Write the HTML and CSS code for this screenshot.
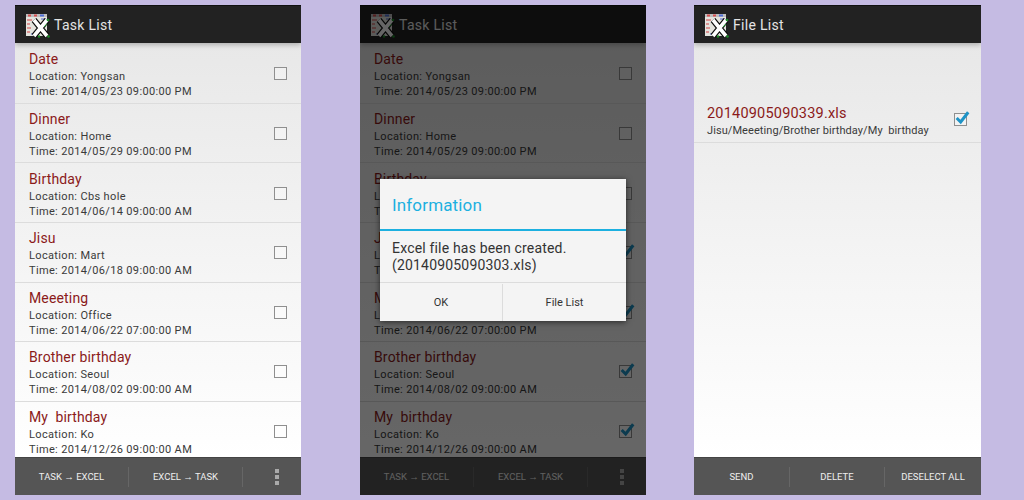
FILE: index.html
```html
<!DOCTYPE html>
<html lang="en">
<head>
    <meta charset="UTF-8">
    <title>Task List screens</title>
    <link rel="stylesheet" href="styles.css">
</head>
<body>
    <svg class="defs" width="0" height="0">
        <symbol id="appIcon" viewBox="0 0 24 24">
            <rect x="0" y="0" width="21" height="22" fill="#e4e4de"/>
            <rect x="0" y="0" width="21" height="3" fill="#bdbdbd"/>
            <path d="M2 1.5h3M8 1.5h3" stroke="#d85050" stroke-width="2"/>
            <path d="M14 1.5h4" stroke="#5070d8" stroke-width="2"/>
            <path d="M1 6h5M1 10h3M1 14h4M1 18h3" stroke="#d87878" stroke-width="1.5"/>
            <path d="M15 5h5M19 10h2M5 20h3" stroke="#8090d0" stroke-width="1.5"/>
            <path d="M8 6l13 16M21 6L8 22" stroke="#0c0c0c" stroke-width="6"/>
            <path d="M8 6l13 16M21 6L8 22" stroke="#fff" stroke-width="3.6"/>
            <circle cx="22" cy="6" r="1.3" fill="#1c8a28"/>
            <circle cx="22.5" cy="22.5" r="1.3" fill="#1c8a28"/>
            <circle cx="13" cy="22.5" r="1.2" fill="#1c8a28"/>
            <path d="M18 13l3-3" stroke="#1c8a28" stroke-width="1"/>
        </symbol>
        <symbol id="tick" viewBox="0 0 18 18">
            <path d="M3 9l4.5 4.5L16 2.5" fill="none" stroke="#1e93c6" stroke-width="3.4"/>
        </symbol>
    </svg>

    <!-- Task list -->
    <div class="phone">
        <div class="top-bar">
            <svg class="app-icon"><use href="#appIcon"/></svg>
            <span>Task List</span>
        </div>
        <div class="list">
            <div class="row"><div class="row-text"><h3>Date</h3><p>Location: Yongsan</p><p>Time: 2014/05/23 09:00:00 PM</p></div><span class="check"></span></div>
            <div class="row"><div class="row-text"><h3>Dinner</h3><p>Location: Home</p><p>Time: 2014/05/29 09:00:00 PM</p></div><span class="check"></span></div>
            <div class="row"><div class="row-text"><h3>Birthday</h3><p>Location: Cbs hole</p><p>Time: 2014/06/14 09:00:00 AM</p></div><span class="check"></span></div>
            <div class="row"><div class="row-text"><h3>Jisu</h3><p>Location: Mart</p><p>Time: 2014/06/18 09:00:00 AM</p></div><span class="check"></span></div>
            <div class="row"><div class="row-text"><h3>Meeeting</h3><p>Location: Office</p><p>Time: 2014/06/22 07:00:00 PM</p></div><span class="check"></span></div>
            <div class="row"><div class="row-text"><h3>Brother birthday</h3><p>Location: Seoul</p><p>Time: 2014/08/02 09:00:00 AM</p></div><span class="check"></span></div>
            <div class="row"><div class="row-text"><h3>My&nbsp; birthday</h3><p>Location: Ko</p><p>Time: 2014/12/26 09:00:00 AM</p></div><span class="check"></span></div>
        </div>
        <div class="bottom-bar">
            <span class="action">TASK → EXCEL</span>
            <span class="action">EXCEL → TASK</span>
            <span class="more"><i></i><i></i><i></i></span>
        </div>
    </div>

    <!-- Task list with dialog -->
    <div class="phone">
        <div class="top-bar">
            <svg class="app-icon"><use href="#appIcon"/></svg>
            <span>Task List</span>
        </div>
        <div class="list">
            <div class="row"><div class="row-text"><h3>Date</h3><p>Location: Yongsan</p><p>Time: 2014/05/23 09:00:00 PM</p></div><span class="check"></span></div>
            <div class="row"><div class="row-text"><h3>Dinner</h3><p>Location: Home</p><p>Time: 2014/05/29 09:00:00 PM</p></div><span class="check"></span></div>
            <div class="row"><div class="row-text"><h3>Birthday</h3><p>Location: Cbs hole</p><p>Time: 2014/06/14 09:00:00 AM</p></div><span class="check"></span></div>
            <div class="row"><div class="row-text"><h3>Jisu</h3><p>Location: Mart</p><p>Time: 2014/06/18 09:00:00 AM</p></div><span class="check"><svg><use href="#tick"/></svg></span></div>
            <div class="row"><div class="row-text"><h3>Meeeting</h3><p>Location: Office</p><p>Time: 2014/06/22 07:00:00 PM</p></div><span class="check"><svg><use href="#tick"/></svg></span></div>
            <div class="row"><div class="row-text"><h3>Brother birthday</h3><p>Location: Seoul</p><p>Time: 2014/08/02 09:00:00 AM</p></div><span class="check"><svg><use href="#tick"/></svg></span></div>
            <div class="row"><div class="row-text"><h3>My&nbsp; birthday</h3><p>Location: Ko</p><p>Time: 2014/12/26 09:00:00 AM</p></div><span class="check"><svg><use href="#tick"/></svg></span></div>
        </div>
        <div class="bottom-bar">
            <span class="action">TASK → EXCEL</span>
            <span class="action">EXCEL → TASK</span>
            <span class="more"><i></i><i></i><i></i></span>
        </div>
        <div class="dim"></div>
        <div class="dialog">
            <div class="dialog-title">Information</div>
            <div class="dialog-body">Excel file has been created.<br>(20140905090303.xls)</div>
            <div class="dialog-buttons">
                <span>OK</span>
                <span>File List</span>
            </div>
        </div>
    </div>

    <!-- File list -->
    <div class="phone">
        <div class="top-bar">
            <svg class="app-icon"><use href="#appIcon"/></svg>
            <span>File List</span>
        </div>
        <div class="list file-list">
            <div class="file-row">
                <div class="row-text"><h3>20140905090339.xls</h3><p>Jisu/Meeeting/Brother birthday/My&nbsp; birthday</p></div>
                <span class="check"><svg><use href="#tick"/></svg></span>
            </div>
        </div>
        <div class="bottom-bar files">
            <span class="action">SEND</span>
            <span class="action">DELETE</span>
            <span class="action">DESELECT ALL</span>
        </div>
    </div>
</body>
</html>
```

FILE: styles.css
```css
* {
    margin: 0;
    padding: 0;
    box-sizing: border-box;
}

body {
    width: 1024px;
    height: 500px;
    overflow: hidden;
    background: #c5bbe3;
    font-family: 'Roboto', sans-serif;
    display: flex;
    padding: 5px 0 5px 15px;
}

.defs {
    position: absolute;
}

.phone {
    width: 286px;
    height: 490px;
    margin-right: 59px;
    display: flex;
    flex-direction: column;
    position: relative;
    overflow: hidden;
    background: #fff;
}

.phone:nth-of-type(2) {
    margin-right: 48px;
}

.phone:last-child {
    width: 287px;
    margin-right: 0;
}

/* Top bar */
.top-bar {
    height: 38px;
    flex: none;
    background: #222;
    border-top: 1px solid #111;
    color: #e4e4e4;
    font-size: 14px;
    letter-spacing: 0.3px;
    display: flex;
    align-items: center;
    padding-left: 11px;
    gap: 4px;
    box-shadow: 0 2px 5px rgba(0, 0, 0, 0.25);
    z-index: 1;
}

.app-icon {
    width: 24px;
    height: 24px;
    margin-top: 2px;
}

/* Task rows */
.list {
    flex: 1;
    min-height: 0;
    overflow: hidden;
    background: linear-gradient(#e8e8e8, #ffffff);
    padding-top: 1.2px;
}

.row {
    height: 59.6px;
    flex: none;
    border-bottom: 1px solid #dcdcdc;
    display: flex;
    align-items: center;
    justify-content: space-between;
    padding: 0 14px;
}

.row-text {
    padding-top: 4px;
}

.row-text h3 {
    font-size: 14px;
    font-weight: 400;
    line-height: 17px;
    margin-bottom: 1px;
    color: #8b1a1a;
    letter-spacing: 0.15px;
}

.row-text p {
    font-size: 11px;
    line-height: 15px;
    color: #3a3a3a;
    letter-spacing: 0.35px;
}

.check {
    width: 13px;
    height: 13px;
    border: 1px solid #8f8f8f;
    background: rgba(255, 255, 255, 0.35);
    position: relative;
    margin-top: 1px;
    flex: none;
}

.check svg {
    position: absolute;
    left: -1px;
    top: -4px;
    width: 16px;
    height: 16px;
}

/* Bottom bar */
.bottom-bar {
    height: 38px;
    flex: none;
    background: #555;
    border-top: 1px solid #444;
    display: flex;
    align-items: center;
    color: #eee;
    font-size: 9.5px;
}

.action {
    width: 114px;
    text-align: center;
    line-height: 20px;
    border-right: 1px solid #666;
}

.more {
    width: 58px;
    padding-left: 10px;
    display: flex;
    flex-direction: column;
    align-items: center;
    gap: 2px;
}

.more i {
    width: 4px;
    height: 4px;
    background: #aaa;
}

.files .action {
    width: 95px;
}

.files .action:first-child {
    width: 96px;
}

.files .action:last-child {
    flex: 1;
    border-right: none;
}

/* Dialog */
.dim {
    position: absolute;
    inset: 0;
    background: rgba(0, 0, 0, 0.6);
    z-index: 2;
}

.dialog {
    position: absolute;
    left: 20px;
    top: 174px;
    width: 246px;
    height: 142px;
    background: #f4f4f4;
    box-shadow: 0 1px 6px rgba(0, 0, 0, 0.6);
    z-index: 3;
    display: flex;
    flex-direction: column;
}

.dialog-title {
    height: 52px;
    flex: none;
    border-bottom: 2px solid #1cb0e0;
    color: #1cb0e0;
    font-size: 17px;
    letter-spacing: 0.15px;
    line-height: 53px;
    padding-left: 12px;
}

.dialog-body {
    height: 52px;
    flex: none;
    border-bottom: 1px solid #dcdcdc;
    font-size: 14px;
    letter-spacing: 0.18px;
    line-height: 17px;
    color: #333;
    padding: 9px 12px 0;
}

.dialog-buttons {
    flex: 1;
    padding-top: 1px;
    display: flex;
    font-size: 11px;
    color: #333;
}

.dialog-buttons span {
    display: flex;
    align-items: center;
    justify-content: center;
    width: 123px;
    border-right: 1px solid #dcdcdc;
}

.dialog-buttons span:last-child {
    flex: 1;
    border-right: none;
}

/* File list */
.file-row {
    margin-top: 53px;
    height: 46px;
    border-bottom: 1px solid #dcdcdc;
    display: flex;
    align-items: center;
    justify-content: space-between;
    padding: 0 14px 0 13px;
}

.file-row .row-text {
    padding-top: 4px;
}

.file-row h3 {
    font-size: 14.5px;
    letter-spacing: 0.2px;
}

.file-row p {
    letter-spacing: 0.08px;
}

.file-row .check {
    margin-top: 0;
}
```
